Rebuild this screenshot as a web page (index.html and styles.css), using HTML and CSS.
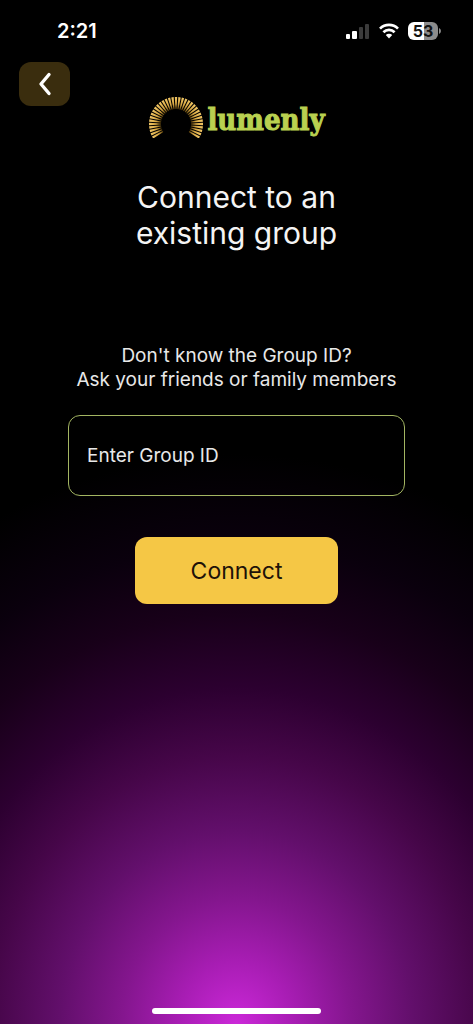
FILE: index.html
```html
<!DOCTYPE html>
<html lang="en">
<head>
<meta charset="utf-8">
<meta name="viewport" content="width=device-width, initial-scale=1">
<title>Lumenly</title>
<link rel="stylesheet" href="styles.css">
</head>
<body class="screen">
<div class="status">
  <span class="time">2:21</span>
  <div class="indicators">
    <svg class="signal" width="24" height="16" viewBox="0 0 24 16" aria-hidden="true">
      <rect x="0" y="11" width="4" height="5" rx="1" fill="#fff"/>
      <rect x="6" y="8" width="5" height="8" rx="1" fill="#fff"/>
      <rect x="13" y="4" width="4" height="12" rx="1" fill="#3b3b3b"/>
      <rect x="19" y="1" width="4" height="15" rx="1" fill="#3b3b3b"/>
    </svg>
    <svg class="wifi" width="20" height="16" viewBox="0 0 20 16" aria-hidden="true">
      <g fill="none" stroke="#fff" stroke-width="2.7">
        <path d="M1 5.6a12.8 12.8 0 0 1 18 0"/>
        <path d="M4.4 9.2a8 8 0 0 1 11.2 0"/>
      </g>
      <path d="M6.8 12a4.6 4.6 0 0 1 6.4 0L10 15.6z" fill="#fff"/>
    </svg>
    <svg class="battery" width="33" height="18" viewBox="0 0 33 18" role="img" aria-label="Battery 53%">
      <path d="M16 0H6a6 6 0 0 0-6 6v6a6 6 0 0 0 6 6h10z" fill="#fff"/>
      <path d="M16 0h8a6 6 0 0 1 6 6v6a6 6 0 0 1-6 6h-8z" fill="#8c8c8c"/>
      <path d="M31 6q2 1 2 3t-2 3z" fill="#8c8c8c"/>
      <text class="level" x="15" y="15" text-anchor="middle">53</text>
    </svg>
  </div>
</div>
<header class="header">
  <button class="back" type="button" aria-label="Back">
    <svg width="14" height="24" viewBox="0 0 14 24" aria-hidden="true"><path d="M11 2.500 3 12l8 9.500" fill="none" stroke="#fff" stroke-width="3.400" stroke-linecap="round" stroke-linejoin="round"/></svg>
  </button>
  <div class="logo">
    <svg width="56" height="42" viewBox="0 0 56 42" aria-hidden="true">
      <defs>
        <linearGradient id="gold" x1="0" y1="0" x2="0" y2="1"><stop offset="0" stop-color="#f0c564"/><stop offset=".6" stop-color="#d6a642"/><stop offset="1" stop-color="#5e430c"/></linearGradient>
        <path id="ray" d="M26.800 1h2.400l-.7 12h-1z" fill="url(#gold)"/>
        <g id="pair"><use href="#ray"/><use href="#ray" transform="rotate(7.500 28 28)"/></g>
        <g id="quad"><use href="#pair"/><use href="#pair" transform="rotate(15 28 28)"/></g>
        <g id="fan"><use href="#quad"/><use href="#quad" transform="rotate(30 28 28)"/></g>
      </defs>
      <use href="#fan" transform="rotate(-120 28 28)"/>
      <use href="#fan" transform="rotate(-60 28 28)"/>
      <use href="#fan"/>
      <use href="#fan" transform="rotate(60 28 28)"/>
      <use href="#ray" transform="rotate(120 28 28)"/>
    </svg>
    <span class="wordmark">lumenly</span>
  </div>
</header>
<main class="content">
  <h1 class="title">Connect to an<br>existing group</h1>
  <form class="form">
    <label class="hint" for="group">Don't know the Group ID?<br>Ask your friends or family members</label>
    <input class="field" id="group" type="text" placeholder="Enter Group ID">
    <button class="connect" type="button">Connect</button>
  </form>
</main>
<div class="home"></div>
</body>
</html>
```
FILE: styles.css
```css
* { box-sizing: border-box; }

.screen {
  margin: 0;
  min-height: 100vh;
  display: flex;
  flex-direction: column;
  font-family: Inter, "Liberation Sans", sans-serif;
  color: #f4f4f4;
  background: #000 radial-gradient(ellipse 520px 570px at 50% 100%,
    #cb28d8 0, #a81db4 11%, #84168e 22%, #620f6b 34%, #460649 47%,
    #2c0030 59%, #180019 72%, #0a000d 84%, #000 100%) no-repeat;
}

.status {
  display: flex;
  justify-content: space-between;
  align-items: center;
  height: 62px;
  padding: 0 32px 0 57px;
}
.time { font-size: 20px; line-height: 28px; font-weight: 600; color: #fff; }
.indicators { display: flex; align-items: center; gap: 9px; }
.level { font: 700 16px Inter, sans-serif; fill: #111; }

.header {
  display: grid;
  grid-template-columns: 1fr auto 1fr;
  align-items: start;
  padding: 0 19px;
}
.back {
  display: flex;
  align-items: center;
  justify-content: center;
  width: 51px;
  height: 44px;
  padding: 0;
  border: 0;
  border-radius: 12px;
  background: #3a2d0e;
}
.logo {
  display: flex;
  align-items: flex-start;
  gap: 3px;
  margin-top: 34px;
}
.wordmark {
  padding-top: 3px;
  font: bold 29px/42px "DejaVu Serif Condensed", "DejaVu Serif", serif;
  font-stretch: condensed;
  color: #b9d150;
  -webkit-text-stroke: 1px #b9d150;
}

.content {
  display: flex;
  flex-direction: column;
  align-items: center;
  padding: 0 68px;
}
.title {
  margin: 38px 0 0;
  font-size: 30px;
  line-height: 36px;
  font-weight: 400;
  text-align: center;
}
.form {
  display: flex;
  flex-direction: column;
  align-items: center;
  align-self: stretch;
  margin-top: 93px;
}
.hint {
  font-size: 19px;
  line-height: 24px;
  text-align: center;
  white-space: nowrap;
  color: #e8e8e8;
}
.field {
  width: 100%;
  height: 81px;
  margin: 23px 0 41px;
  padding: 0 18px;
  border: 1px solid #a3b562;
  border-radius: 12px;
  background: transparent;
  font: 400 19px Inter, sans-serif;
  color: #e8e8e8;
}
.field::placeholder { color: #e8e8e8; opacity: 1; }
.connect {
  width: 60%;
  height: 67px;
  border: 0;
  border-radius: 12px;
  background: #f5c745;
  font: 400 23px Inter, sans-serif;
  color: #1e1208;
}

.home {
  align-self: center;
  width: 169px;
  height: 6px;
  margin: auto 0 10px;
  border-radius: 3px;
  background: #fff;
}
```
